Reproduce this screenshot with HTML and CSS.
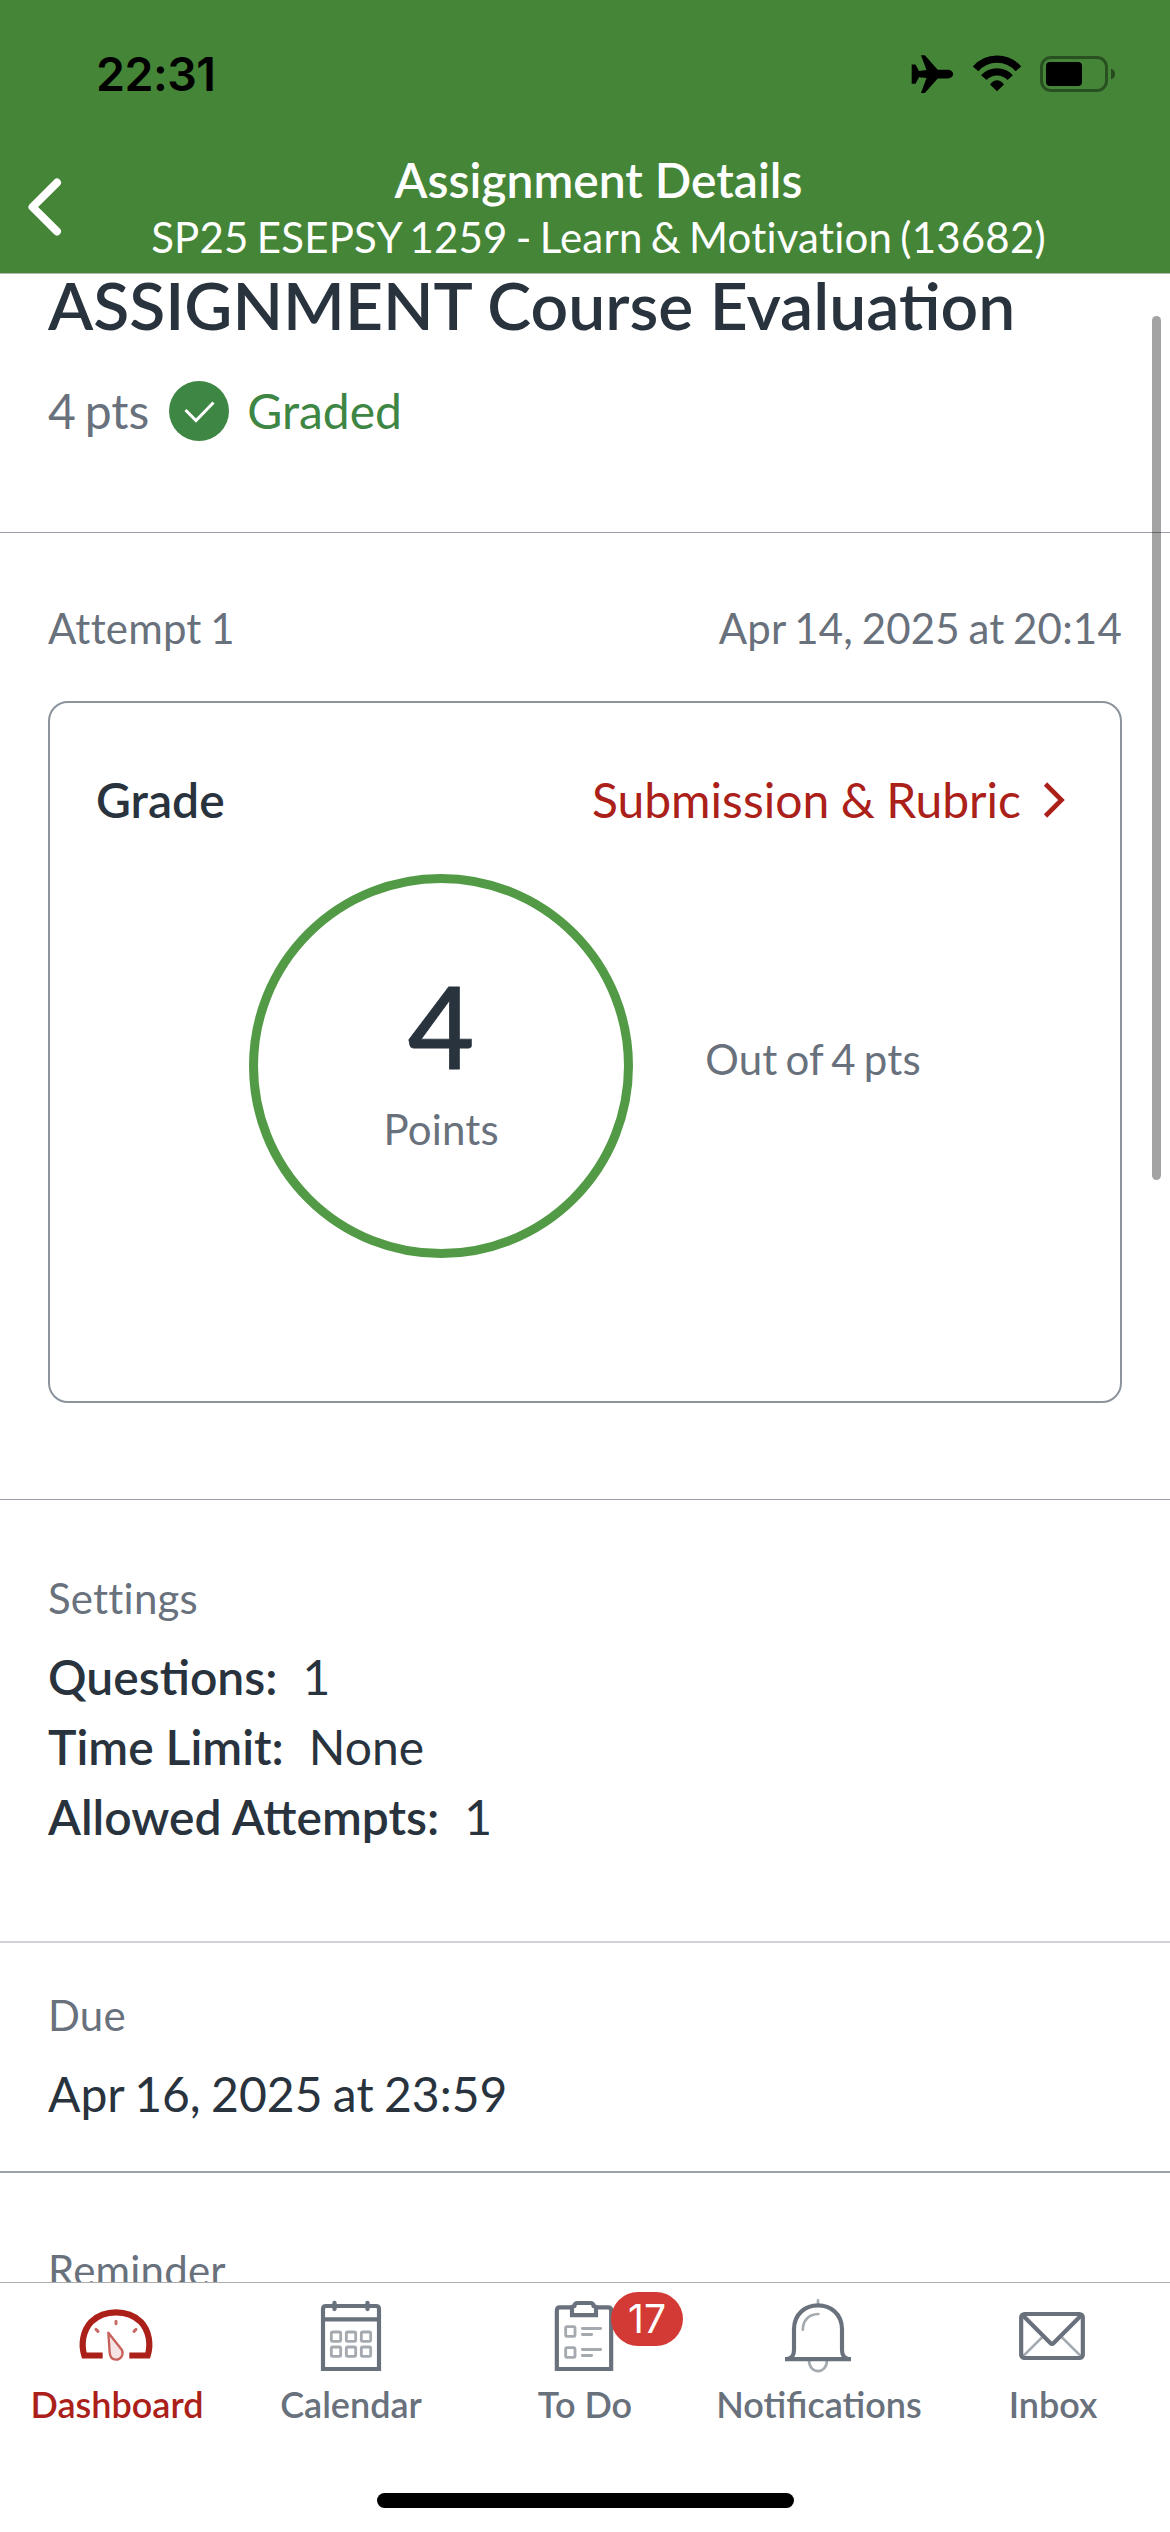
FILE: index.html
```html
<!DOCTYPE html>
<html lang="en">
<head>
<meta charset="utf-8">
<title>Assignment Details</title>
<link rel="stylesheet" href="styles.css">
</head>
<body>
<div class="screen">
  <header class="header">
    <div class="status">
      <span class="time">22:31</span>
      <div class="status-icons">
        <svg class="plane" width="43" height="40" viewBox="0 0 44 41" preserveAspectRatio="none"><path d="M.7 10.8H4.6L8.2 17.4L15.9 16.5L10.2 1.2H14.2L27.3 16.2H37.5C41 16.2 43.2 18.5 43.2 20.6S41 25 37.5 25H27.3L14.2 40H10.2L15.9 24.7L8.2 23.8L4.6 30.4H.7Z"/></svg>
        <svg class="wifi" width="50" height="40" viewBox="0 0 50 41" preserveAspectRatio="none"><path d="M3.6 15.3A27.8 27.8 0 0 1 46.4 15.3M11.8 24.2A17.8 17.8 0 0 1 38.2 24.2" fill="none" stroke="#000" stroke-width="7.4"/><path d="M25 38.2L18 31.2Q25 22.8 32 31.2Z"/></svg>
        <svg class="battery" width="76" height="36" viewBox="0 0 76 36"><rect x="1.5" y="1.5" width="65" height="33" rx="9.5" fill="none" stroke="#000" stroke-opacity=".4" stroke-width="3"/><rect x="6" y="6" width="36" height="24" rx="4"/><path d="M71 12.500Q75 14 75 18T71 23.500Z" opacity=".45"/></svg>
      </div>
    </div>
    <div class="navbar">
      <svg class="back" width="44" height="64" viewBox="0 0 44 64"><path d="M33 7.600L8.500 32L33 56.400" fill="none" stroke="#fff" stroke-width="8" stroke-linecap="round" stroke-linejoin="round"/></svg>
      <div class="nav-text">
        <div class="nav-title">Assignment Details</div>
        <div class="nav-sub">SP25 ESEPSY 1259 - Learn &amp; Motivation (13682)</div>
      </div>
    </div>
  </header>

  <main class="content">
    <section class="sec sec-title">
      <h1 class="title">ASSIGNMENT Course Evaluation</h1>
      <div class="graded-row">
        <span class="points">4 pts</span>
        <svg class="check" width="60" height="60" viewBox="0 0 60 60"><circle cx="30" cy="30" r="30" fill="#3d8643"/><path d="M16.500 29L27 39.500L44.500 21.500" fill="none" stroke="#fff" stroke-width="3"/></svg>
        <span class="graded">Graded</span>
      </div>
    </section>

    <section class="sec sec-attempt">
      <div class="attempt-row"><span class="label">Attempt 1</span><span class="label">Apr 14, 2025 at 20:14</span></div>
      <div class="card">
        <div class="card-head">
          <span class="strong">Grade</span>
          <span class="link">Submission &amp; Rubric
            <svg width="22" height="36" viewBox="0 0 22 36"><path d="M2.500 2L18.500 18L2.500 34" fill="none" stroke="#ab2019" stroke-width="4.600"/></svg>
          </span>
        </div>
        <div class="score-row">
          <div class="ring"><div class="score">4</div><div class="label">Points</div></div>
          <div class="label out-of">Out of 4 pts</div>
        </div>
      </div>
    </section>

    <section class="sec sec-settings">
      <div class="label">Settings</div>
      <dl class="settings">
        <div class="setting"><dt>Questions:</dt><dd>1</dd></div>
        <div class="setting"><dt>Time Limit:</dt><dd>None</dd></div>
        <div class="setting"><dt>Allowed Attempts:</dt><dd>1</dd></div>
      </dl>
    </section>

    <section class="sec sec-due">
      <div class="label">Due</div>
      <div class="value">Apr 16, 2025 at 23:59</div>
    </section>

    <section class="sec sec-reminder">
      <div class="label">Reminder</div>
    </section>
  </main>

  <footer class="footer">
    <nav class="tabs">
      <div class="tab active">
        <svg width="72" height="78" viewBox="243 78 216 234" fill="none" stroke="#ab2019">
          <path d="M308 256.500H253C242 222 249 182 274 155C314 118 382 118 422 155C447 182 454 222 443 256.500H388" stroke-width="18.500"/>
          <g stroke-width="9" stroke-linecap="round" opacity=".66"><path d="M348 154V161M288 178L294 184M408 178L402 184"/></g>
          <path d="M325 188L366 240C372 256 361 269 348 269C336 269 330 260 329 248Z" fill="#ab2019" fill-opacity=".12" stroke="#c8605b" stroke-width="7" stroke-linejoin="round"/>
        </svg>
        <span>Dashboard</span>
      </div>
      <div class="tab">
        <svg width="72" height="78" viewBox="945 78 216 234" fill="none" stroke="#68717c">
          <path d="M969 297V117Q969 108 978 108H1128Q1137 108 1137 117V297ZM969 148H1137" stroke-width="12.500"/>
          <path d="M1003.500 99V117M1102.500 99V117" stroke-width="13" stroke-linecap="round"/>
          <g stroke="#a4aab0" stroke-width="8.500"><rect x="994" y="186" width="28" height="28" rx="4"/><rect x="1039" y="186" width="28" height="28" rx="4"/><rect x="1084" y="186" width="28" height="28" rx="4"/><rect x="994" y="231" width="28" height="28" rx="4"/><rect x="1039" y="231" width="28" height="28" rx="4"/><rect x="1084" y="231" width="28" height="28" rx="4"/></g>
        </svg>
        <span>Calendar</span>
      </div>
      <div class="tab">
        <svg width="72" height="78" viewBox="387 78 216 234" fill="none" stroke="#68717c" stroke-width="12.500">
          <path d="M456 112H420Q410.500 112 410.500 122V297H573.500V122Q573.500 112 564 112H528"/>
          <path d="M456 135.500V111Q459 109 463 108Q464 99 473 99H511Q520 99 521 108Q525 109 528 111V135.500Z"/>
          <g stroke="#a4aab0" stroke-width="8.500"><rect x="437" y="170" width="28" height="29" rx="4"/><rect x="437" y="233" width="28" height="29" rx="4"/><path d="M487 175.500H542M487 193.500H515M487 238.500H542M487 256.500H515" stroke-linecap="round"/></g>
        </svg>
        <span>To Do</span>
        <b class="badge">17</b>
      </div>
      <div class="tab">
        <svg width="72" height="78" viewBox="69 78 216 234" fill="none" stroke="#68717c" stroke-width="12.500">
          <g stroke="#a4aab0" stroke-width="8"><path d="M174 100V91M128.500 179C129 151 146 133 175 132" stroke-linecap="round"/><path d="M147 271C147 314 201 314 201 271"/></g>
          <path d="M75 267.500H273"/>
          <path d="M82 267Q102 264 102 240V178C102 82 246 82 246 178V240Q246 264 266 267"/>
        </svg>
        <span>Notifications</span>
      </div>
      <div class="tab">
        <svg width="72" height="78" viewBox="771 78 216 234" fill="none" stroke="#68717c" stroke-width="12.500">
          <path d="M788 260L846 202M964 260L906 202" stroke="#a4aab0" stroke-width="8"/>
          <rect x="783.500" y="132" width="185" height="132" rx="10"/>
          <path d="M788 136L871 219Q876 224 881 219L964 136"/>
        </svg>
        <span>Inbox</span>
      </div>
    </nav>
    <div class="home"></div>
  </footer>
  <div class="scrollbar"></div>
</div>
</body>
</html>
```

FILE: styles.css
```css
* { box-sizing: border-box; margin: 0; padding: 0; }
body { background: #fff; }
.screen {
  position: relative;
  width: 1170px;
  height: 2532px;
  display: flex;
  flex-direction: column;
  overflow: hidden;
  background: #fff;
  color: #29333e;
  font-family: Lato, "Open Sans", sans-serif;
  font-size: 48px;
  line-height: 58px;
}
svg { display: block; flex: none; overflow: visible; }

/* header */
.header { flex: none; height: 274px; background: #458537; border-bottom: 1px solid #b3b8b0; }
.status { display: flex; justify-content: space-between; height: 150px; padding: 45px 54px 0 96px; }
.time { color: #000; font: 600 46.5px/58px Inter, sans-serif; letter-spacing: -.5px; }
.status-icons { display: flex; gap: 18px; padding-top: 9px; }
.battery { margin-top: 2px; }
.navbar { display: flex; padding-left: 24px; }
.back { margin-top: 25px; }
.nav-text { flex: 1; margin-left: -44px; padding-left: 3px; color: #fff; text-align: center; }
.nav-title { height: 58px; margin-top: 1px; font-weight: 600; font-size: 48px; }
.nav-sub { height: 50px; margin-top: 3px; font-size: 42px; line-height: 50px; font-variant-ligatures: none; letter-spacing: .2px; word-spacing: -2.8px; }

/* content */
.content { flex: 1; min-height: 0; overflow: hidden; }
.sec { padding-left: 48px; padding-right: 48px; border-bottom: 1px solid #9aa1a9; }
.label { color: #68717c; font-size: 42px; line-height: 50px; font-variant-ligatures: none; letter-spacing: .2px; word-spacing: -2.4px; }
.sec-title { height: 259px; }
.title { font-size: 66px; line-height: 62px; font-weight: 600; }
.graded-row { display: flex; align-items: center; height: 60px; margin-top: 45px; color: #68717c; }
.points { word-spacing: -3.5px; }
.check { margin-left: 20px; margin-right: 18px; }
.graded { color: #3d8643; }

.sec-attempt { height: 967px; padding-top: 70px; }
.attempt-row { display: flex; justify-content: space-between; }
.card { height: 702px; margin-top: 48px; padding: 68px 46px 0; border: 2px solid #8b939c; border-radius: 20px; }
.card-head { display: flex; justify-content: space-between; }
.strong { font-weight: 600; }
.link { display: flex; align-items: center; gap: 22px; padding-right: 9px; color: #ab2019; word-spacing: -.8px; }
.score-row { display: flex; justify-content: center; align-items: center; gap: 72px; margin-top: 45px; }
.ring { width: 384px; height: 384px; padding-top: 72px; border: 9px solid #529a45; border-radius: 50%; text-align: center; }
.score { height: 138px; margin-bottom: 11px; font-size: 115px; line-height: 138px; font-weight: 500; -webkit-text-stroke: .8px #29333e; }
.out-of { padding-bottom: 14px; word-spacing: -3px; }

.sec-settings { height: 443px; padding-top: 73px; border-bottom: 2px solid #cfd2d6; }
.settings { margin-top: 19px; }
.setting { display: flex; gap: 25px; line-height: 70px; }
.setting dt { font-weight: 600; }
.sec-due { height: 230px; padding-top: 47px; border-bottom: 2px solid #9aa1a9; }
.value { margin-top: 25px; word-spacing: -1.9px; }
.sec-reminder { padding-top: 72px; border: 0; }

/* tab bar */
.footer { flex: none; display: flex; flex-direction: column; align-items: center; height: 250px; border-top: 1px solid #acacac; background: #fff; }
.tabs { display: flex; width: 1170px; height: 210px; padding-top: 13px; }
.tab { position: relative; flex: 1 0 0; display: flex; flex-direction: column; align-items: center; gap: 8px; color: #68717c; font-size: 36px; line-height: 44px; font-weight: 600; }
.tab.active { color: #ab2019; }
.badge { position: absolute; left: 143px; top: -4px; width: 72px; height: 54px; border-radius: 27px; background: #d33a35; color: #fff; text-align: center; font: 400 39px/54px Inter, sans-serif; }
.home { width: 417px; height: 15px; border-radius: 8px; background: #000; }

.scrollbar { position: absolute; left: 1152px; top: 316px; width: 9px; height: 864px; border-radius: 5px; background: rgba(0,0,0,.36); }
```
